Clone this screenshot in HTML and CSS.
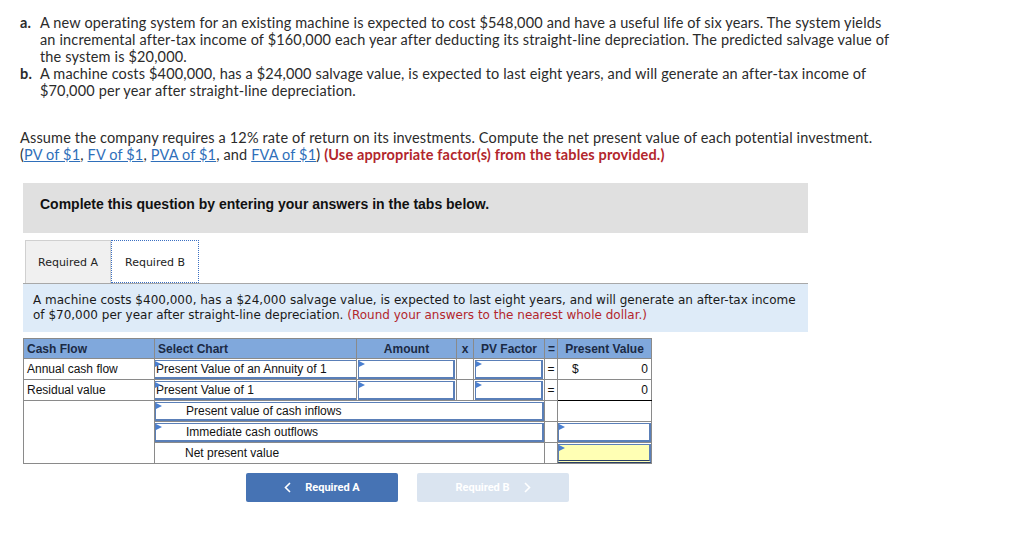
FILE: index.html
```html
<!DOCTYPE html>
<html>
<head>
<meta charset="utf-8">
<link rel="stylesheet" href="styles.css">
</head>
<body>
<div class="page">
  <ol class="items">
    <li><span class="lbl">a.</span><span class="txt">A new operating system for an existing machine is expected to cost $548,000 and have a useful life of six years. The system yields an incremental after-tax income of $160,000 each year after deducting its straight-line depreciation. The predicted salvage value of the system is $20,000.</span></li>
    <li><span class="lbl">b.</span><span class="txt">A machine costs $400,000, has a $24,000 salvage value, is expected to last eight years, and will generate an after-tax income of $70,000 per year after straight-line depreciation.</span></li>
  </ol>
  <p class="assume">Assume the company requires a 12% rate of return on its investments. Compute the net present value of each potential investment.<br>(<a href="#">PV of $1</a>, <a href="#">FV of $1</a>, <a href="#">PVA of $1</a>, and <a href="#">FVA of $1</a>) <b class="red">(Use appropriate factor(s) from the tables provided.)</b></p>

  <div class="panel">
    <div class="complete">Complete this question by entering your answers in the tabs below.</div>
    <div class="tabs">
      <div class="tab">Required A</div>
      <div class="tab active">Required B</div>
    </div>
    <div class="question">A machine costs $400,000, has a $24,000 salvage value, is expected to last eight years, and will generate an after-tax income of $70,000 per year after straight-line depreciation. <span class="round">(Round your answers to the nearest whole dollar.)</span></div>

    <table class="grid">
      <colgroup>
        <col class="w1"><col class="w2"><col class="w3"><col class="w4"><col class="w5"><col class="w6"><col class="w7">
      </colgroup>
      <thead>
        <tr><th class="l">Cash Flow</th><th class="l">Select Chart</th><th>Amount</th><th>x</th><th>PV Factor</th><th>=</th><th>Present Value</th></tr>
      </thead>
      <tbody>
        <tr>
          <td>Annual cash flow</td>
          <td class="in"><div class="box sel mk">Present Value of an Annuity of 1</div></td>
          <td class="in"><div class="box mk"></div></td>
          <td></td>
          <td class="in"><div class="box mk"></div></td>
          <td class="c">=</td>
          <td class="pv"><span>$</span><span>0</span></td>
        </tr>
        <tr>
          <td>Residual value</td>
          <td class="in"><div class="box sel mk">Present Value of 1</div></td>
          <td class="in"><div class="box mk"></div></td>
          <td></td>
          <td class="in"><div class="box mk"></div></td>
          <td class="c">=</td>
          <td class="pv total"><span></span><span>0</span></td>
        </tr>
        <tr>
          <td rowspan="3"></td>
          <td colspan="4" class="in"><div class="box wide mk">Present value of cash inflows</div></td>
          <td></td>
          <td></td>
        </tr>
        <tr>
          <td colspan="4" class="in"><div class="box wide mk">Immediate cash outflows</div></td>
          <td></td>
          <td class="in"><div class="box pvin mk"></div></td>
        </tr>
        <tr>
          <td colspan="4"><div class="plain">Net present value</div></td>
          <td></td>
          <td class="in"><div class="box pvin yellow mk"></div></td>
        </tr>
      </tbody>
    </table>

    <div class="nav">
      <button class="btn prev"><svg class="chev" width="7" height="11" viewBox="0 0 7 11"><path d="M6 1 L1.5 5.5 L6 10" fill="none" stroke="#fff" stroke-width="1.6"/></svg>Required A</button>
      <button class="btn next">Required B<svg class="chev" width="7" height="11" viewBox="0 0 7 11"><path d="M1 1 L5.5 5.5 L1 10" fill="none" stroke="#fff" stroke-width="1.6"/></svg></button>
    </div>
  </div>
</div>
</body>
</html>
```
FILE: styles.css
```css
* { box-sizing: border-box; }
body { margin: 0; background: #fff; }
.page {
  padding: 14px 0 0 20px;
  font-family: Lato, "Open Sans", sans-serif;
  font-size: 14.5px;
  letter-spacing: 0.15px;
  color: #2b2b2b;
}
.items { list-style: none; margin: 0; padding: 0; width: 871px; }
.items li { display: flex; line-height: 17px; }
.items .lbl { width: 20px; flex: none; font-weight: bold; }
.items .txt { flex: 1; }
.assume { margin: 30px 0 0 0; line-height: 17px; width: 880px; }
.assume a { color: #2f6fba; text-decoration: underline; }
.red { color: #b2262c; }

.panel { margin-left: 3px; width: 785px; letter-spacing: 0; }
.complete {
  margin-top: 20px;
  height: 50px;
  background: #e0e0e0;
  font-family: "Liberation Sans", Arial, sans-serif;
  font-weight: bold;
  font-size: 14px;
  color: #111;
  padding: 13px 0 0 17px;
}
.tabs { display: flex; margin-top: 7px; padding-left: 2px; border-bottom: 1px solid #a8a8a8; }
.tab {
  font-family: "DejaVu Sans", Verdana, sans-serif;
  font-size: 11px;
  color: #222;
  height: 43px;
  line-height: 43px;
  padding: 0 12px;
  background: #f0f0f0;
  border: 1px solid #d0d0d0;
  border-bottom: none;
}
.tab.active {
  background: #fff;
  border: 1px dotted #3a6fc2;
  padding: 0 13px;
}
.question {
  background: #deebf8;
  font-family: "DejaVu Sans", Verdana, sans-serif;
  font-size: 12px;
  line-height: 15px;
  color: #1a1a1a;
  padding: 9px 10px 9px 10px;
}
.round { color: #b3262c; }

.grid {
  margin-top: 6px;
  border-collapse: collapse;
  table-layout: fixed;
  width: 628px;
  font-family: "Liberation Sans", Arial, sans-serif;
  font-size: 12px;
  color: #111;
}
.w1 { width: 131px; }
.w2 { width: 202px; }
.w3 { width: 100px; }
.w4 { width: 17px; }
.w5 { width: 71px; }
.w6 { width: 13px; }
.w7 { width: 94px; }
.grid th {
  background: #80a8dc;
  height: 20px;
  font-size: 12px;
  font-weight: bold;
  color: #1b2a44;
  border: 1px solid #8a8a8a;
  padding: 0 3px;
  text-align: center;
}
.grid th.l { text-align: left; }
.grid td {
  border: 1px solid #8a8a8a;
  height: 21px;
  padding: 0 3px;
  vertical-align: middle;
  white-space: nowrap;
}
.grid td.in { padding: 0; }
.grid td.c { text-align: center; padding: 0; }
.grid td.pv { padding: 0 3px 0 14px; }
.grid td.pv span:last-child { float: right; }
.grid td.pv.total { border-bottom: 1px solid #000; }
.box {
  position: relative;
  height: 19px;
  margin: 0 1px;
  border: 2px solid #5a7fb8;
  border-width: 1px 2px 2px 1px;
  line-height: 16px;
  background: #fff;
}
.box.sel { border: none; border-top: 1px solid #5a7fb8; border-bottom: 2px solid #5a7fb8; margin: 0; padding-left: 1px; }
.box.wide { margin: 0; padding-left: 30px; line-height: 16px; }
.box.pvin { margin: 0; }
.box.yellow { background: #ffffb4; border-bottom: 3px double #2a3f66; }
.mk::before {
  content: "";
  position: absolute;
  left: 0;
  top: 0;
  border-left: 6px solid #4a7fd0;
  border-top: 3px solid transparent;
  border-bottom: 3px solid transparent;
}
.plain { padding-left: 27px; }

.nav { display: flex; gap: 19px; margin: 9px 0 0 223px; }
.btn {
  width: 152px;
  height: 29px;
  border: none;
  border-radius: 2px;
  font-family: "Roboto", "Liberation Sans", sans-serif;
  font-weight: bold;
  font-size: 11px;
  color: #fff;
  display: flex;
  align-items: center;
  justify-content: center;
}
.btn.prev { background: #4673b4; }
.btn.next { background: #dae4f0; }
.chev { margin-right: 14px; }
.next .chev { margin: 0 0 0 14px; }
```
